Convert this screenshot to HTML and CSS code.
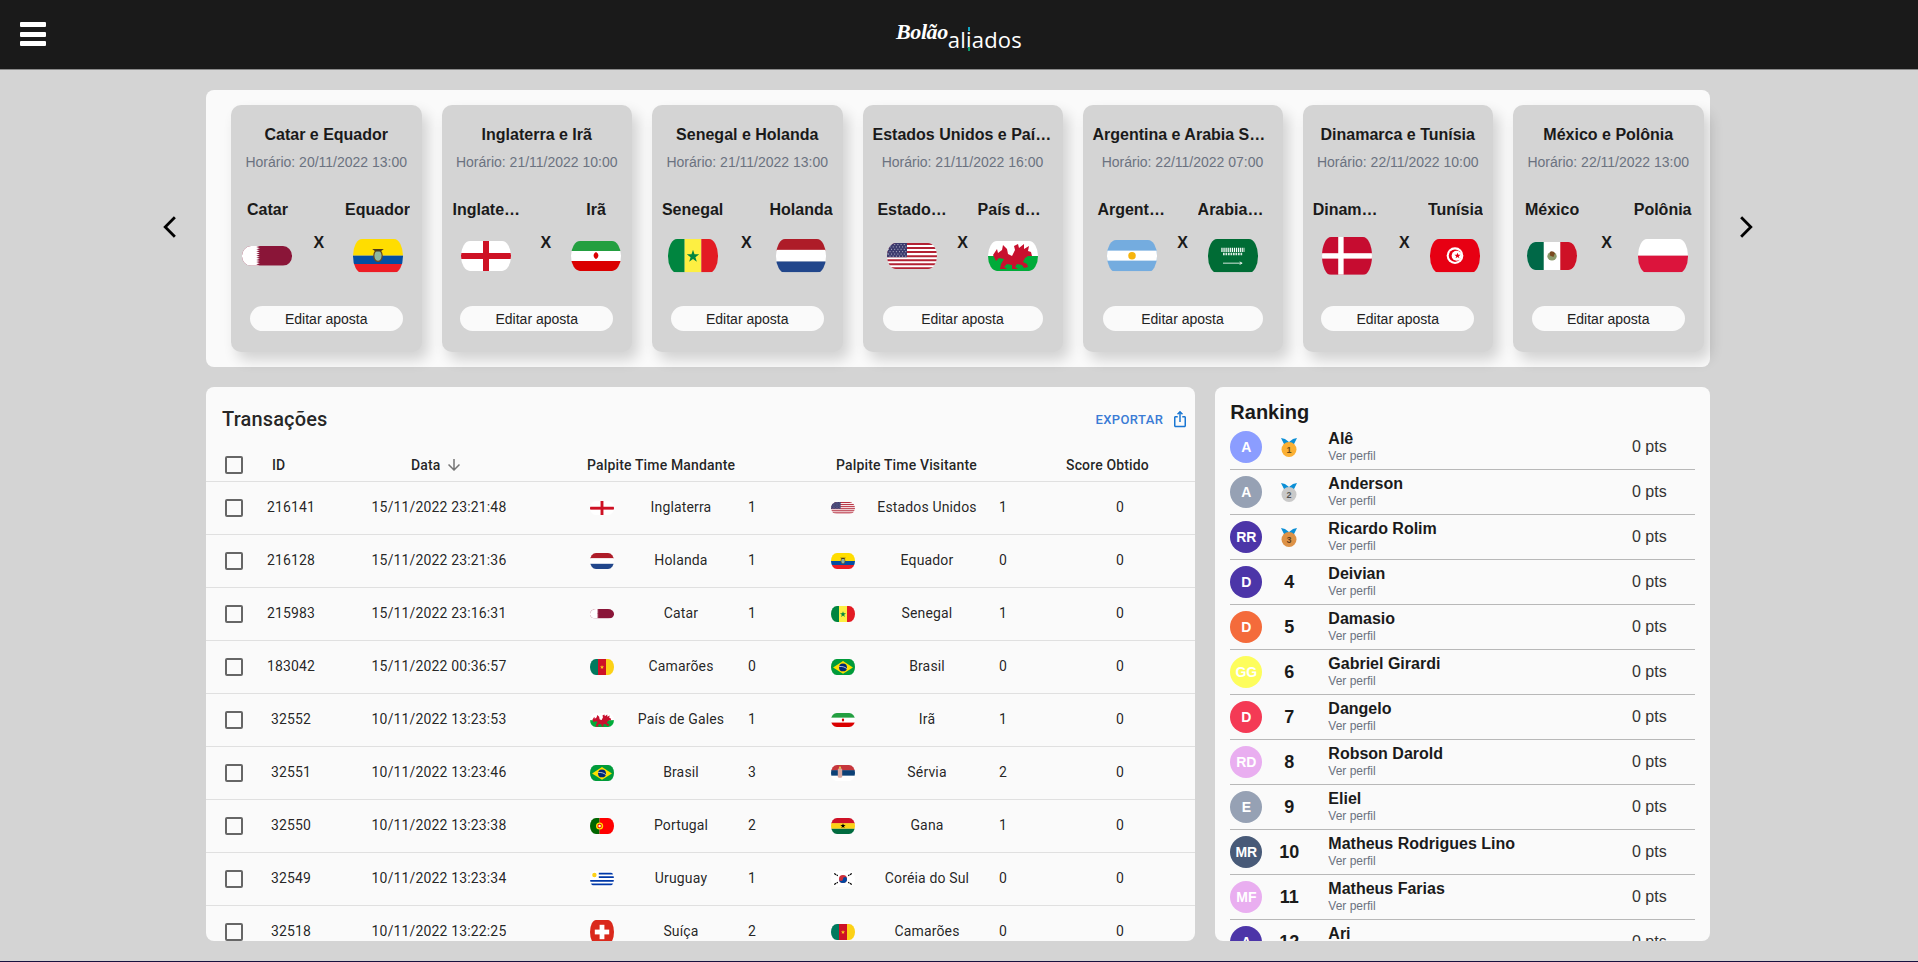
FILE: index.html
```html
<!DOCTYPE html>
<html lang="pt-BR">

<head>
  <title>Bolão Aliados</title>
  <meta charset="UTF-8" />
  <meta name="viewport" content="width=device-width, initial-scale=1" />
  <link rel="stylesheet" href="styles.css">
</head>

<body>
  <!-- flags, reused by both the cards and the table -->
  <svg class="sprite" xmlns="http://www.w3.org/2000/svg">
    <symbol id="qat"><rect width="28" height="11" fill="#8a1538"/><path fill="#fff" d="M0 0H10L8 .6l2 .6-2 .6 2 .6-2 .6 2 .6-2 .6 2 .6-2 .6 2 .6-2 .6 2 .6-2 .6 2 .6-2 .6 2 .6-2 .6 2 .8H0z"/></symbol>
    <symbol id="ecu"><rect width="60" height="20" fill="#ffdd00"/><rect y="20" width="60" height="10" fill="#034ea2"/><rect y="30" width="60" height="10" fill="#ed1c24"/><ellipse cx="30" cy="20" rx="5" ry="7" fill="#8fb8a0" stroke="#6b4a1e" stroke-width="1.5"/><path d="M23 12h14l-4 3h-6z" fill="#4a3a1c"/></symbol>
    <symbol id="eng"><rect width="50" height="30" fill="#fff"/><rect x="22" width="6" height="30" fill="#ce1124"/><rect y="12" width="50" height="6" fill="#ce1124"/></symbol>
    <symbol id="irn"><rect width="50" height="10" fill="#239f40"/><rect y="10" width="50" height="10" fill="#fff"/><rect y="20" width="50" height="10" fill="#da0000"/><path d="M25 11c-2 1-3 3-2 5 .4 1 1.4 1.800 2 2 .6-.2 1.600-1 2-2 1-2 0-4-2-5z" fill="#da0000"/></symbol>
    <symbol id="sen"><rect width="20" height="40" fill="#00853f"/><rect x="20" width="20" height="40" fill="#fdef42"/><rect x="40" width="20" height="40" fill="#e31b23"/><path d="M30 13l1.800 5.400h5.700l-4.600 3.400 1.700 5.400-4.600-3.300-4.600 3.300 1.700-5.400-4.600-3.400h5.700z" fill="#00853f"/></symbol>
    <symbol id="ned"><rect width="60" height="14" fill="#ae1c28"/><rect y="13" width="60" height="14" fill="#fff"/><rect y="27" width="60" height="13" fill="#21468b"/></symbol>
    <symbol id="usa"><rect width="190" height="100" fill="#fff"/><path stroke="#b22234" stroke-width="7.700" d="M0 3.800h190M0 19.200h190M0 34.600h190M0 50h190M0 65.400h190M0 80.800h190M0 96.200h190"/><rect width="76" height="54" fill="#3c3b6e"/><path stroke="#fff" stroke-width="3" stroke-dasharray="3 9" d="M4 6h70M10 15h64M4 24h70M10 33h64M4 42h70M10 50h64"/></symbol>
    <symbol id="wal"><rect width="50" height="15" fill="#fff"/><rect y="15" width="50" height="15" fill="#00ab39"/><path fill="#c8102e" d="M5 14L9 8l1 4 4-3 1-5 4 4 1 5 4 2 3-6-1-4 4-2 1 4 5-4v5l5-3-1 5 3 1 1 4h-4l-3 2-2 4 4 2 1 3-4 1-2-3-5-1-2 3 3 2h-6v-4l-5-1-3 3 3 2h-7l1-5 3-5-5-1-3 3z"/></symbol>
    <symbol id="arg"><rect width="80" height="50" fill="#74acdf"/><rect y="17" width="80" height="16" fill="#fff"/><circle cx="40" cy="25" r="6" fill="#f6b40e"/></symbol>
    <symbol id="ksa"><rect width="60" height="40" fill="#006c35"/><path stroke="#fff" stroke-width="5" stroke-dasharray="1.500 1" d="M16 13h28" fill="none"/><path stroke="#dfeee6" stroke-width="3" stroke-dasharray="2 1" d="M18 18h24" fill="none"/><path stroke="#fff" stroke-width="1" d="M18 29h22m-2-1.500l3 1.500-3 1.500" fill="none"/></symbol>
    <symbol id="den"><rect width="37" height="28" fill="#c60c30"/><rect x="12" width="4" height="28" fill="#fff"/><rect y="12" width="37" height="4" fill="#fff"/></symbol>
    <symbol id="tun"><rect width="60" height="40" fill="#e70013"/><circle cx="30" cy="20" r="10" fill="#fff"/><circle cx="30" cy="20" r="7.500" fill="#e70013"/><circle cx="32" cy="20" r="6" fill="#fff"/><path d="M33 16.500l1 2.500h2.700l-2.200 1.600.8 2.600-2.300-1.600-2.300 1.600.8-2.600-2.200-1.600H32z" fill="#e70013"/></symbol>
    <symbol id="mex"><rect width="70" height="40" fill="#fff"/><rect width="23.400" height="40" fill="#006847"/><rect x="46.600" width="23.400" height="40" fill="#ce1126"/><ellipse cx="35" cy="20" rx="6.500" ry="6" fill="#8c9a6a"/><path d="M32 14c2-2 6-1 7 2l-2 5-5-2z" fill="#7a4a20"/></symbol>
    <symbol id="pol"><rect width="60" height="20" fill="#fff"/><rect y="20" width="60" height="20" fill="#dc143c"/></symbol>
    <symbol id="cmr"><rect width="20" height="40" fill="#007a5e"/><rect x="20" width="20" height="40" fill="#ce1126"/><rect x="40" width="20" height="40" fill="#fcd116"/><path d="M30 15l1.300 3.700h3.900l-3.100 2.400 1.100 3.800-3.200-2.200-3.200 2.200 1.100-3.800-3.100-2.400h3.900z" fill="#fcd116"/></symbol>
    <symbol id="bra"><rect width="70" height="49" fill="#009b3a"/><path d="M35 6l29 18.500L35 43 6 24.500z" fill="#fedf00"/><circle cx="35" cy="24.500" r="11.500" fill="#002776"/><path d="M24 22c8-1 16 1 22 6" stroke="#fff" stroke-width="2" fill="none"/></symbol>
    <symbol id="srb"><rect width="60" height="14" fill="#c6363c"/><rect y="13" width="60" height="14" fill="#0c4076"/><rect y="27" width="60" height="13" fill="#fff"/><rect x="17" y="8" width="11" height="24" rx="4" fill="#d9a8a0"/><rect x="20" y="4" width="5" height="5" fill="#e8c34a"/></symbol>
    <symbol id="por"><rect width="24" height="40" fill="#006600"/><rect x="24" width="36" height="40" fill="#f00"/><circle cx="24" cy="20" r="9" fill="#ffe000"/><circle cx="24" cy="20" r="5.500" fill="#f00"/><circle cx="24" cy="20" r="3" fill="#fff"/></symbol>
    <symbol id="gha"><rect width="60" height="14" fill="#ce1126"/><rect y="13" width="60" height="14" fill="#fcd116"/><rect y="27" width="60" height="13" fill="#006b3f"/><path d="M30 13l1.600 4.700h4.900l-4 2.900 1.500 4.700-4-2.900-4 2.900 1.500-4.700-4-2.900h4.900z" fill="#000"/></symbol>
    <symbol id="uru"><rect width="60" height="40" fill="#fff"/><path stroke="#0038a8" stroke-width="4.400" d="M22 6.700h38M22 15.600h38M0 24.400h60M0 33.300h60"/><circle cx="11" cy="10" r="5.500" fill="#fcd116"/></symbol>
    <symbol id="kor"><rect width="60" height="40" fill="#fff"/><circle cx="30" cy="20" r="10" fill="#cd2e3a"/><path d="M20 20a5 5 0 0 0 10 0 5 5 0 0 1 10 0 10 10 0 0 1-20 0z" fill="#0047a0"/><path stroke="#000" stroke-width="3" stroke-dasharray="6 1.500" d="M8 6l9 6M52 6l-9 6M8 34l9-6M52 34l-9-6"/></symbol>
    <symbol id="sui"><rect width="40" height="40" fill="#da291c"/><rect x="16" y="8" width="8" height="24" fill="#fff"/><rect x="8" y="16" width="24" height="8" fill="#fff"/></symbol>
  </svg>

  <header class="topbar">
    <div class="burger"><span></span><span></span><span></span></div>
    <div class="logo"><span class="logo-script">Bolão</span><span class="logo-thin">al<span class="logo-i">i</span>ados</span></div>
    <div></div>
  </header>

  <main class="page">
    <section class="slider">
      <svg class="arrow arrow-left" viewBox="0 0 14 22"><path d="M12 2L3 11l9 9" fill="none" stroke="#000" stroke-width="2.600"/></svg>

      <article class="game">
        <h3 class="game-title">Catar e Equador</h3>
        <p class="game-time">Horário: 20/11/2022 13:00</p>
        <div class="match">
          <div class="team"><div class="team-name">Catar</div><div class="flag-slot"><svg class="flag" viewBox="0 0 28 11"><use href="#qat"/></svg></div></div>
          <div class="versus">X</div>
          <div class="team"><div class="team-name">Equador</div><div class="flag-slot"><svg class="flag" viewBox="0 0 60 40"><use href="#ecu"/></svg></div></div>
        </div>
        <button class="bet-btn">Editar aposta</button>
      </article>

      <article class="game">
        <h3 class="game-title">Inglaterra e Irã</h3>
        <p class="game-time">Horário: 21/11/2022 10:00</p>
        <div class="match">
          <div class="team"><div class="team-name">Inglaterra</div><div class="flag-slot"><svg class="flag" viewBox="0 0 50 30"><use href="#eng"/></svg></div></div>
          <div class="versus">X</div>
          <div class="team"><div class="team-name">Irã</div><div class="flag-slot"><svg class="flag" viewBox="0 0 50 30"><use href="#irn"/></svg></div></div>
        </div>
        <button class="bet-btn">Editar aposta</button>
      </article>

      <article class="game">
        <h3 class="game-title">Senegal e Holanda</h3>
        <p class="game-time">Horário: 21/11/2022 13:00</p>
        <div class="match">
          <div class="team"><div class="team-name">Senegal</div><div class="flag-slot"><svg class="flag" viewBox="0 0 60 40"><use href="#sen"/></svg></div></div>
          <div class="versus">X</div>
          <div class="team"><div class="team-name">Holanda</div><div class="flag-slot"><svg class="flag" viewBox="0 0 60 40"><use href="#ned"/></svg></div></div>
        </div>
        <button class="bet-btn">Editar aposta</button>
      </article>

      <article class="game game-wide">
        <h3 class="game-title">Estados Unidos e País de Gales</h3>
        <p class="game-time">Horário: 21/11/2022 16:00</p>
        <div class="match">
          <div class="team"><div class="team-name">Estados Unidos</div><div class="flag-slot"><svg class="flag" viewBox="0 0 190 100"><use href="#usa"/></svg></div></div>
          <div class="versus">X</div>
          <div class="team"><div class="team-name">País de Gales</div><div class="flag-slot"><svg class="flag" viewBox="0 0 50 30"><use href="#wal"/></svg></div></div>
        </div>
        <button class="bet-btn">Editar aposta</button>
      </article>

      <article class="game game-wide">
        <h3 class="game-title">Argentina e Arabia Saudita</h3>
        <p class="game-time">Horário: 22/11/2022 07:00</p>
        <div class="match">
          <div class="team"><div class="team-name">Argentina</div><div class="flag-slot"><svg class="flag" viewBox="0 0 80 50"><use href="#arg"/></svg></div></div>
          <div class="versus">X</div>
          <div class="team"><div class="team-name">Arabia Saudita</div><div class="flag-slot"><svg class="flag" viewBox="0 0 60 40"><use href="#ksa"/></svg></div></div>
        </div>
        <button class="bet-btn">Editar aposta</button>
      </article>

      <article class="game">
        <h3 class="game-title">Dinamarca e Tunísia</h3>
        <p class="game-time">Horário: 22/11/2022 10:00</p>
        <div class="match">
          <div class="team"><div class="team-name">Dinamarca</div><div class="flag-slot"><svg class="flag" viewBox="0 0 37 28"><use href="#den"/></svg></div></div>
          <div class="versus">X</div>
          <div class="team"><div class="team-name">Tunísia</div><div class="flag-slot"><svg class="flag" viewBox="0 0 60 40"><use href="#tun"/></svg></div></div>
        </div>
        <button class="bet-btn">Editar aposta</button>
      </article>

      <article class="game">
        <h3 class="game-title">México e Polônia</h3>
        <p class="game-time">Horário: 22/11/2022 13:00</p>
        <div class="match">
          <div class="team"><div class="team-name">México</div><div class="flag-slot"><svg class="flag" viewBox="0 0 70 40"><use href="#mex"/></svg></div></div>
          <div class="versus">X</div>
          <div class="team"><div class="team-name">Polônia</div><div class="flag-slot"><svg class="flag" viewBox="0 0 60 40"><use href="#pol"/></svg></div></div>
        </div>
        <button class="bet-btn">Editar aposta</button>
      </article>

      <svg class="arrow arrow-right" viewBox="0 0 14 22"><path d="M2 2l9 9-9 9" fill="none" stroke="#000" stroke-width="2.600"/></svg>
    </section>

    <div class="bottom">
      <section class="panel">
        <div class="panel-head">
          <h2 class="panel-title">Transações</h2>
          <a class="export">EXPORTAR
            <svg class="export-icon" viewBox="0 0 24 24"><path fill="#1976d2" d="M16 5l-1.420 1.420-1.590-1.590V16h-1.980V4.830L9.420 6.420 8 5l4-4 4 4zm4 5v11c0 1.100-.9 2-2 2H6c-1.110 0-2-.9-2-2V10c0-1.110.89-2 2-2h3v2H6v11h12V10h-3V8h3c1.100 0 2 .89 2 2z"/></svg>
          </a>
        </div>

        <div class="thead">
          <span class="check"></span>
          <span>ID</span>
          <span class="sort">Data <svg class="sort-icon" viewBox="0 0 24 24"><path fill="#757575" d="M20 12l-1.410-1.410L13 16.170V4h-2v12.170l-5.580-5.590L4 12l8 8 8-8z"/></svg></span>
          <span>Palpite Time Mandante</span>
          <span>Palpite Time Visitante</span>
          <span>Score Obtido</span>
        </div>

        <div class="trow">
          <span class="check"></span><span>216141</span><span>15/11/2022 23:21:48</span>
          <svg class="flag-sm" viewBox="0 0 50 30"><use href="#eng"/></svg><span>Inglaterra</span><span class="goals">1</span>
          <svg class="flag-sm" viewBox="0 0 190 100"><use href="#usa"/></svg><span>Estados Unidos</span><span class="goals">1</span><span>0</span>
        </div>
        <div class="trow">
          <span class="check"></span><span>216128</span><span>15/11/2022 23:21:36</span>
          <svg class="flag-sm" viewBox="0 0 60 40"><use href="#ned"/></svg><span>Holanda</span><span class="goals">1</span>
          <svg class="flag-sm" viewBox="0 0 60 40"><use href="#ecu"/></svg><span>Equador</span><span class="goals">0</span><span>0</span>
        </div>
        <div class="trow">
          <span class="check"></span><span>215983</span><span>15/11/2022 23:16:31</span>
          <svg class="flag-sm" viewBox="0 0 28 11"><use href="#qat"/></svg><span>Catar</span><span class="goals">1</span>
          <svg class="flag-sm" viewBox="0 0 60 40"><use href="#sen"/></svg><span>Senegal</span><span class="goals">1</span><span>0</span>
        </div>
        <div class="trow">
          <span class="check"></span><span>183042</span><span>15/11/2022 00:36:57</span>
          <svg class="flag-sm" viewBox="0 0 60 40"><use href="#cmr"/></svg><span>Camarões</span><span class="goals">0</span>
          <svg class="flag-sm" viewBox="0 0 70 49"><use href="#bra"/></svg><span>Brasil</span><span class="goals">0</span><span>0</span>
        </div>
        <div class="trow">
          <span class="check"></span><span>32552</span><span>10/11/2022 13:23:53</span>
          <svg class="flag-sm" viewBox="0 0 50 30"><use href="#wal"/></svg><span>País de Gales</span><span class="goals">1</span>
          <svg class="flag-sm" viewBox="0 0 50 30"><use href="#irn"/></svg><span>Irã</span><span class="goals">1</span><span>0</span>
        </div>
        <div class="trow">
          <span class="check"></span><span>32551</span><span>10/11/2022 13:23:46</span>
          <svg class="flag-sm" viewBox="0 0 70 49"><use href="#bra"/></svg><span>Brasil</span><span class="goals">3</span>
          <svg class="flag-sm" viewBox="0 0 60 40"><use href="#srb"/></svg><span>Sérvia</span><span class="goals">2</span><span>0</span>
        </div>
        <div class="trow">
          <span class="check"></span><span>32550</span><span>10/11/2022 13:23:38</span>
          <svg class="flag-sm" viewBox="0 0 60 40"><use href="#por"/></svg><span>Portugal</span><span class="goals">2</span>
          <svg class="flag-sm" viewBox="0 0 60 40"><use href="#gha"/></svg><span>Gana</span><span class="goals">1</span><span>0</span>
        </div>
        <div class="trow">
          <span class="check"></span><span>32549</span><span>10/11/2022 13:23:34</span>
          <svg class="flag-sm" viewBox="0 0 60 40"><use href="#uru"/></svg><span>Uruguay</span><span class="goals">1</span>
          <svg class="flag-sm" viewBox="0 0 60 40"><use href="#kor"/></svg><span>Coréia do Sul</span><span class="goals">0</span><span>0</span>
        </div>
        <div class="trow">
          <span class="check"></span><span>32518</span><span>10/11/2022 13:22:25</span>
          <svg class="flag-sm" viewBox="0 0 40 40"><use href="#sui"/></svg><span>Suíça</span><span class="goals">2</span>
          <svg class="flag-sm" viewBox="0 0 60 40"><use href="#cmr"/></svg><span>Camarões</span><span class="goals">0</span><span>0</span>
        </div>
      </section>

      <section class="panel ranking">
        <h2 class="ranking-title">Ranking</h2>

        <div class="rank-row">
          <div class="avatar av-periwinkle">A</div>
          <div class="rank"><svg class="medal" viewBox="0 0 16 19"><path fill="#0b8fd6" d="M0 0l4 1 4 3 4-3 4-1-3 6-5 2-5-2z"/><circle cx="8" cy="11.500" r="7.500" fill="#fbb034"/><text x="8" y="15" class="medal-num">1</text></svg></div>
          <div class="who"><div class="who-name">Alê</div><div class="who-link">Ver perfil</div></div>
          <div class="score">0 pts</div>
        </div>
        <div class="rank-row">
          <div class="avatar av-gray">A</div>
          <div class="rank"><svg class="medal" viewBox="0 0 16 19"><path fill="#0b8fd6" d="M0 0l4 1 4 3 4-3 4-1-3 6-5 2-5-2z"/><circle cx="8" cy="11.500" r="7.500" fill="#c9c9c9"/><text x="8" y="15" class="medal-num">2</text></svg></div>
          <div class="who"><div class="who-name">Anderson</div><div class="who-link">Ver perfil</div></div>
          <div class="score">0 pts</div>
        </div>
        <div class="rank-row">
          <div class="avatar av-indigo">RR</div>
          <div class="rank"><svg class="medal" viewBox="0 0 16 19"><path fill="#0b8fd6" d="M0 0l4 1 4 3 4-3 4-1-3 6-5 2-5-2z"/><circle cx="8" cy="11.500" r="7.500" fill="#dd9247"/><text x="8" y="15" class="medal-num">3</text></svg></div>
          <div class="who"><div class="who-name">Ricardo Rolim</div><div class="who-link">Ver perfil</div></div>
          <div class="score">0 pts</div>
        </div>
        <div class="rank-row">
          <div class="avatar av-indigo">D</div>
          <div class="rank">4</div>
          <div class="who"><div class="who-name">Deivian</div><div class="who-link">Ver perfil</div></div>
          <div class="score">0 pts</div>
        </div>
        <div class="rank-row">
          <div class="avatar av-orange">D</div>
          <div class="rank">5</div>
          <div class="who"><div class="who-name">Damasio</div><div class="who-link">Ver perfil</div></div>
          <div class="score">0 pts</div>
        </div>
        <div class="rank-row">
          <div class="avatar av-yellow">GG</div>
          <div class="rank">6</div>
          <div class="who"><div class="who-name">Gabriel Girardi</div><div class="who-link">Ver perfil</div></div>
          <div class="score">0 pts</div>
        </div>
        <div class="rank-row">
          <div class="avatar av-red">D</div>
          <div class="rank">7</div>
          <div class="who"><div class="who-name">Dangelo</div><div class="who-link">Ver perfil</div></div>
          <div class="score">0 pts</div>
        </div>
        <div class="rank-row">
          <div class="avatar av-pink">RD</div>
          <div class="rank">8</div>
          <div class="who"><div class="who-name">Robson Darold</div><div class="who-link">Ver perfil</div></div>
          <div class="score">0 pts</div>
        </div>
        <div class="rank-row">
          <div class="avatar av-gray">E</div>
          <div class="rank">9</div>
          <div class="who"><div class="who-name">Eliel</div><div class="who-link">Ver perfil</div></div>
          <div class="score">0 pts</div>
        </div>
        <div class="rank-row">
          <div class="avatar av-slate">MR</div>
          <div class="rank">10</div>
          <div class="who"><div class="who-name">Matheus Rodrigues Lino</div><div class="who-link">Ver perfil</div></div>
          <div class="score">0 pts</div>
        </div>
        <div class="rank-row">
          <div class="avatar av-pink">MF</div>
          <div class="rank">11</div>
          <div class="who"><div class="who-name">Matheus Farias</div><div class="who-link">Ver perfil</div></div>
          <div class="score">0 pts</div>
        </div>
        <div class="rank-row">
          <div class="avatar av-indigo">A</div>
          <div class="rank">12</div>
          <div class="who"><div class="who-name">Ari</div><div class="who-link">Ver perfil</div></div>
          <div class="score">0 pts</div>
        </div>
      </section>
    </div>
  </main>
</body>

</html>
```

FILE: styles.css
```css
* {
  box-sizing: border-box;
}

html {
  background-color: #17123f;
}

body {
  margin: 0;
  height: 961px;
  overflow: hidden;
  background-color: #d4d4d4;
  color: #1a1a1a;
  font-family: 'Liberation Sans', sans-serif;
}

.sprite {
  display: none;
}

/* top bar */
.topbar {
  display: grid;
  grid-template-columns: 1fr auto 1fr;
  align-items: center;
  height: 70px;
  background-color: #1a1a1a;
  border-bottom: 1px solid #8a8a8a;
}

.burger {
  display: flex;
  flex-direction: column;
  gap: 4.5px;
  width: 26px;
  margin: 0 0 1px 20px;
}

.burger span {
  height: 5px;
  border-radius: 1px;
  background-color: #fff;
}

.logo {
  display: flex;
  align-items: flex-start;
  height: 30px;
  color: #fff;
}

.logo-script {
  font-family: 'Liberation Serif', serif;
  font-style: italic;
  font-weight: bold;
  font-size: 22px;
  line-height: 24px;
  letter-spacing: -0.4px;
}

.logo-thin {
  margin-top: 6px;
  font-family: 'Open Sans', sans-serif;
  font-weight: 400;
  font-size: 22px;
  line-height: 26px;
  letter-spacing: 0.2px;
}

.logo-i {
  position: relative;
}

.logo-i::before,
.logo-i::after {
  content: '';
  position: absolute;
  left: 1.5px;
  width: 2px;
  height: 4px;
}

.logo-i::before {
  top: 3px;
  background-color: #12a5c4;
}

.logo-i::after {
  top: 23px;
  background-color: #0aa06e;
}

/* page */
.page {
  display: flex;
  flex-direction: column;
  gap: 20px;
  padding: 20px 208px 0 206px;
}

.slider {
  position: relative;
  display: flex;
  gap: 20px;
  height: 277px;
  padding: 15px 0 0 25px;
  border-radius: 8px;
  background-color: #fafafa;
}

.arrow {
  position: absolute;
  top: 125px;
  width: 15px;
  height: 24px;
}

.arrow-left {
  left: -44px;
}

.arrow-right {
  right: -44px;
}

.game {
  display: flex;
  flex-direction: column;
  flex: none;
  width: 190.5px;
  height: 247px;
  padding-top: 20px;
  border-radius: 10px;
  background-color: #d4d4d4;
  box-shadow: 6px 8px 14px rgba(0, 0, 0, 0.16);
  text-align: center;
}

.game-wide {
  width: 200px;
}

.game-title {
  margin: 0;
  padding: 0 10px;
  overflow: hidden;
  font-size: 16px;
  line-height: 20px;
  font-weight: bold;
  white-space: nowrap;
  text-overflow: ellipsis;
}

.game-time {
  margin: 7px 0 0;
  color: #6b7280;
  font-size: 14px;
  line-height: 20px;
}

.match {
  display: flex;
  justify-content: space-around;
  margin-top: 28px;
  padding: 0 1px;
}

.game-wide .match {
  padding: 0 10px;
}

.team {
  max-width: 68px;
  min-width: 50px;
}

.game-wide .team {
  max-width: 70px;
}

.team-name {
  overflow: hidden;
  font-size: 16px;
  line-height: 20px;
  font-weight: bold;
  white-space: nowrap;
  text-overflow: ellipsis;
}

.flag-slot {
  display: flex;
  align-items: center;
  justify-content: center;
  height: 38px;
  margin-top: 17px;
}

.flag {
  display: block;
  flex: none;
  width: 50px;
  height: auto;
  border-radius: 9px / 50%;
}

.versus {
  margin-top: 33px;
  font-size: 16px;
  line-height: 20px;
  font-weight: bold;
}

.bet-btn {
  align-self: center;
  width: 153px;
  height: 25px;
  margin-top: 31px;
  padding: 0;
  border: 0;
  border-radius: 13px;
  background-color: #fafafa;
  color: #222;
  font-family: inherit;
  font-size: 14px;
}

.game-wide .bet-btn {
  width: 160px;
}

/* bottom panels */
.bottom {
  display: grid;
  grid-template-columns: 2fr 1fr;
  gap: 20px;
  height: 554px;
}

.panel {
  overflow: hidden;
  border-radius: 8px;
  background-color: #fafafa;
  font-family: Roboto, sans-serif;
}

.panel-head {
  display: flex;
  align-items: center;
  justify-content: space-between;
  height: 62px;
  padding: 2px 6px 0 16px;
}

.panel-title {
  margin: 0;
  font-size: 20px;
  font-weight: 500;
  letter-spacing: 0.15px;
  color: rgba(0, 0, 0, 0.87);
}

.export {
  display: flex;
  align-items: center;
  gap: 8px;
  color: #3a7bd5;
  font-size: 13px;
  font-weight: 500;
  letter-spacing: 0.4px;
}

.export-icon {
  width: 18px;
  height: 18px;
}

.thead {
  display: grid;
  grid-template-columns: 66px 139px 176px 249px 230px 1fr;
  align-items: center;
  height: 33px;
  border-bottom: 1px solid #e0e0e0;
  font-size: 14px;
  font-weight: 500;
  letter-spacing: 0.15px;
  color: rgba(0, 0, 0, 0.87);
}

.thead .check {
  margin-left: 19px;
}

.sort {
  display: flex;
  align-items: center;
  gap: 4px;
}

.sort-icon {
  width: 18px;
  height: 18px;
}

.trow {
  display: grid;
  grid-template-columns: 56px 58px 238px 56px 134px 83px 24px 144px 61px 120px;
  align-items: center;
  justify-items: center;
  height: 53px;
  border-bottom: 1px solid #e0e0e0;
  font-size: 14px;
  letter-spacing: 0.15px;
  color: rgba(0, 0, 0, 0.87);
}

.trow > span {
  padding-bottom: 2px;
}

.trow > .check {
  padding-bottom: 0;
}

.trow .flag-sm:nth-of-type(1) {
  justify-self: end;
}

.check {
  display: block;
  width: 18px;
  height: 18px;
  border: 2px solid #666;
  border-radius: 2px;
}

.flag-sm {
  display: block;
  width: 24px;
  height: auto;
  border-radius: 6px / 50%;
}

.goals {
  justify-self: start;
}

/* ranking */
.ranking {
  padding: 13px 15px 0;
  font-family: 'Liberation Sans', sans-serif;
}

.ranking-title {
  margin: 0 0 1px;
  font-size: 20px;
  line-height: 24px;
  font-weight: bold;
}

.rank-row {
  display: grid;
  grid-template-columns: 32px 54px 1fr 63px;
  align-items: center;
  height: 45px;
  border-bottom: 1px solid #b8b8b8;
}

.avatar {
  display: flex;
  align-items: center;
  justify-content: center;
  width: 32px;
  height: 32px;
  border-radius: 50%;
  color: #fff;
  font-size: 14px;
  font-weight: bold;
}

.av-periwinkle { background-color: #8b9dff; }
.av-gray { background-color: #96a1b4; }
.av-indigo { background-color: #4c35a8; }
.av-orange { background-color: #f46b3b; }
.av-yellow { background-color: #fdfd5c; }
.av-red { background-color: #f43a55; }
.av-pink { background-color: #e9aef0; }
.av-slate { background-color: #485a78; }

.rank {
  display: flex;
  justify-content: center;
  font-size: 18px;
  font-weight: bold;
}

.medal {
  width: 16px;
  height: 19px;
}

.medal-num {
  font-size: 9px;
  font-weight: bold;
  text-anchor: middle;
  fill: rgba(0, 0, 0, 0.6);
}

.who {
  padding-left: 12px;
}

.who-name {
  font-size: 16px;
  line-height: 19px;
  font-weight: bold;
}

.who-link {
  color: #6b7280;
  font-size: 12px;
  line-height: 17px;
}

.score {
  font-size: 16px;
  color: #333;
}
```
